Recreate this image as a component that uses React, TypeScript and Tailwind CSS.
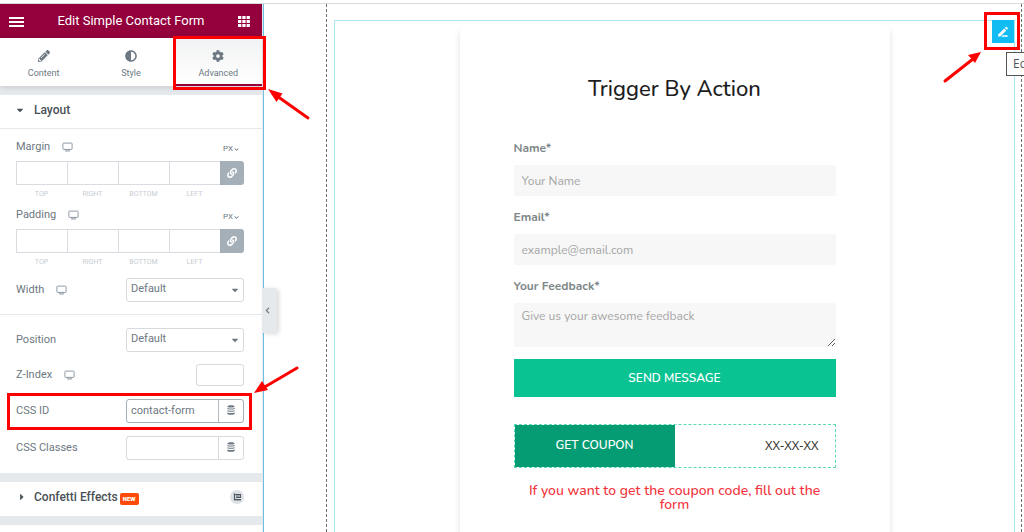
import type { ReactNode } from "react";
import {
  FaAdjust,
  FaCaretDown,
  FaCaretRight,
  FaCog,
  FaLink,
  FaPencilAlt,
  FaChevronDown,
  FaChevronLeft,
} from "react-icons/fa";

function MenuIcon() {
  return (
    <svg viewBox="0 0 15 10" className="h-[10px] w-[15px]" fill="currentColor" aria-hidden="true">
      <rect y="0" width="15" height="2" />
      <rect y="4" width="15" height="2" />
      <rect y="8" width="15" height="2" />
    </svg>
  );
}

function GridIcon() {
  return (
    <svg viewBox="0 0 12 11" className="h-[11px] w-3" fill="currentColor" aria-hidden="true">
      {[0, 4, 8].map((y) =>
        [0, 4.3, 8.6].map((x) => <rect key={`${x}-${y}`} x={x} y={y} width="3.3" height="3" />)
      )}
    </svg>
  );
}

function DesktopIcon() {
  return (
    <svg viewBox="0 0 11 10" className="h-[10px] w-[11px] text-[#8f9ba6]" fill="none" stroke="currentColor" aria-hidden="true">
      <rect x="0.9" y="1.1" width="9.2" height="6.3" rx="0.6" />
      <path d="M4 7.5v1.4M7 7.5v1.4M3.2 9h4.6" />
    </svg>
  );
}

function DatabaseIcon() {
  return (
    <svg viewBox="0 0 8 10" className="h-[10px] w-2" fill="currentColor" aria-hidden="true">
      <path d="M0.300 1.900C0.300 0.800 1.700 0.300 4 0.300s3.700 0.500 3.700 1.600q-3.700 1.200-7.400 0z" />
      <path d="M0.300 3.100q3.700 1 7.400 0v1q-3.700 1-7.400 0z" />
      <path d="M0.300 5.300q3.700 1 7.400 0v1q-3.700 1-7.400 0z" />
      <path d="M0.300 7.500q3.700 1 7.400 0v0.900C7.700 9.400 6.300 9.800 4 9.800S0.300 9.400 0.300 8.400z" />
    </svg>
  );
}

function PenIcon() {
  return (
    <svg viewBox="0 0 12 12" className="h-3 w-3" fill="currentColor" aria-hidden="true">
      <path d="M1.2 8.6 7.3 2.4l2 2-6.1 6.1H1.2z" />
      <path d="M7.9 1.8l0.8-0.8q0.5-0.4 1 0l1 1q0.4 0.5 0 1l-0.8 0.8z" />
      <path d="M5.6 9.3h5v1.4H4.3z" />
    </svg>
  );
}

function Tab({ icon, label, active = false }: { icon: ReactNode; label: string; active?: boolean }) {
  return (
    <button
      type="button"
      role="tab"
      aria-selected={active}
      className={
        active
          ? "flex w-full flex-col items-center border-b-2 border-[#93003c] bg-linear-to-b from-[#f1f2f3] to-white pt-3 text-[#6d7882]"
          : "flex w-full flex-col items-center border-b-2 border-white pt-3 text-[#6d7882]"
      }
    >
      <span className="text-[12px]">{icon}</span>
      <span className="mt-1 h-[18px] text-[9px] leading-[14px]">{label}</span>
    </button>
  );
}

function Dimensions({ label }: { label: string }) {
  const sides = ["TOP", "RIGHT", "BOTTOM", "LEFT"];
  return (
    <fieldset>
      <div className="flex h-4 items-center">
        <span className="mr-3">{label}</span>
        <DesktopIcon />
        <button type="button" aria-label={`${label} unit`} className="mr-[5px] ml-auto flex items-center gap-px pt-1 text-[8px]">
          PX <FaChevronDown className="text-[5px]" />
        </button>
      </div>
      <div className="mt-[6px] flex">
        <div className="flex flex-1">
          {sides.map((side) => (
            <label key={side} className="flex flex-1 flex-col text-center text-[7px] leading-[18px] text-[#c6ccd2]">
              <input
                type="text"
                aria-label={`${label} ${side}`}
                className="order-first h-6 w-full border border-r-0 border-[#d9dde1] bg-white text-center text-[11px] text-[#6d7882]"
              />
              {side}
            </label>
          ))}
        </div>
        <button type="button" aria-label="Link values" className="flex h-6 w-6 items-center justify-center rounded-r-[3px] bg-[#a4afb7] text-[10px] text-white">
          <FaLink />
        </button>
      </div>
    </fieldset>
  );
}

function SelectRow({ id, label, responsive = false }: { id: string; label: string; responsive?: boolean }) {
  return (
    <div className="flex h-6 items-center">
      <label htmlFor={id} className="mr-3">{label}</label>
      {responsive && <DesktopIcon />}
      <div className="relative ml-auto w-[118px]">
        <select id={id} className="h-6 w-full appearance-none rounded-[3px] border border-[#d5dadf] bg-white pr-5 pb-0.5 pl-1 text-[11px] text-[#6d7882]">
          <option>Default</option>
        </select>
        <FaCaretDown className="pointer-events-none absolute top-[7px] right-1 text-[10px]" />
      </div>
    </div>
  );
}

function DynamicField({ id, label, value = "", strong = false }: { id: string; label: string; value?: string; strong?: boolean }) {
  return (
    <div className="flex h-6 items-center justify-between">
      <label htmlFor={id}>{label}</label>
      <div
        className={
          strong
            ? "flex h-6 w-[118px] divide-x divide-[#b4bcc3] rounded-[3px] border border-[#a4afb7]"
            : "flex h-6 w-[118px] divide-x divide-[#d5dadf] rounded-[3px] border border-[#d5dadf]"
        }
      >
        <input id={id} type="text" defaultValue={value} className="min-w-0 flex-1 bg-transparent px-1 pt-px text-[11px] text-[#6d7882]" />
        <button type="button" aria-label={`${label} dynamic tags`} className="flex w-6 items-center justify-center pb-0.5">
          <DatabaseIcon />
        </button>
      </div>
    </div>
  );
}

function Sidebar() {
  return (
    <aside className="relative w-[264px] shrink-0 border-r border-[#6ec1e4] bg-[#e6e9ec] pr-px font-[Roboto,sans-serif] text-[11px] text-[#6d7882]">
      <header className="flex h-[34px] items-center justify-between bg-[#93003c] px-[9px] pr-3 text-white">
        <button type="button" aria-label="Menu" className="pt-0.5"><MenuIcon /></button>
        <h1 className="text-[13px]">Edit Simple Contact Form</h1>
        <button type="button" aria-label="Widgets"><GridIcon /></button>
      </header>

      <nav role="tablist" className="relative grid grid-cols-3 bg-white shadow-[0_1px_6px_rgba(0,0,0,0.15)]">
        <Tab icon={<FaPencilAlt />} label="Content" />
        <Tab icon={<FaAdjust />} label="Style" />
        <div className="relative flex">
          <Tab icon={<FaCog />} label="Advanced" active />
          <div className="pointer-events-none absolute -top-[2px] -right-1 -bottom-1 -left-[2px] z-20 border-[3px] border-[#fe0000]" />
          <svg viewBox="0 0 44 34" className="pointer-events-none absolute top-[49px] left-[92px] z-20 h-[34px] w-11" aria-hidden="true">
            <path d="M41 31 10 9" stroke="#fe0000" strokeWidth="3" strokeLinecap="round" />
            <path d="M1 2 15.500 6.500 9.500 15z" fill="#fe0000" />
          </svg>
        </div>
      </nav>

      <section className="mt-[9px] bg-white">
        <h2>
          <button type="button" aria-expanded="true" className="flex h-[34px] w-full items-center border-b border-[#e6e9ec] pb-1 pl-4 text-[12px] font-medium text-[#495157]">
            <FaCaretDown className="mr-[10px] w-2 text-[10px]" />Layout
          </button>
        </h2>
        <div className="flex flex-col pt-[10px] pr-[18px] pb-[13px] pl-4">
          <Dimensions label="Margin" />
          <div className="mt-1"><Dimensions label="Padding" /></div>
          <div className="mt-[7px]"><SelectRow id="width" label="Width" responsive /></div>
          <hr className="mt-3 -mr-[18px] mb-[13px] -ml-4 border-[#e6e9ec]" />
          <SelectRow id="position" label="Position" />
          <div className="mt-3 flex h-[22px] items-center">
            <label htmlFor="z-index" className="mr-3">Z-Index</label>
            <DesktopIcon />
            <input id="z-index" type="text" className="ml-auto h-[22px] w-12 rounded-[3px] border border-[#d5dadf] px-1" />
          </div>
          <div className="relative mt-[13px]">
            <DynamicField id="css-id" label="CSS ID" value="contact-form" strong />
            <div className="pointer-events-none absolute -top-[6px] -right-2 -bottom-[7px] -left-[9px] z-20 border-[3px] border-[#fe0000]" />
            <svg viewBox="0 0 46 30" className="pointer-events-none absolute -top-[34px] left-[237px] z-20 h-[30px] w-[46px]" aria-hidden="true">
              <path d="M44 3 10 23" stroke="#fe0000" strokeWidth="3" strokeLinecap="round" />
              <path d="M1 28 9 16 15 25z" fill="#fe0000" />
            </svg>
          </div>
          <div className="mt-[13px]"><DynamicField id="css-classes" label="CSS Classes" /></div>
        </div>
      </section>

      <section className="mt-[9px] bg-white">
        <h2>
          <button type="button" aria-expanded="false" className="flex h-[34px] w-full items-center pr-[18px] pb-1 pl-[18px] text-[12px] font-medium text-[#495157]">
            <FaCaretRight className="mr-2 w-2 text-[10px]" />Confetti Effects
            <span className="mt-1 ml-0.5 rounded-xs bg-[#ff4b0a] px-[3px] text-[6px] leading-3 font-black text-white">NEW</span>
            <span className="ml-auto flex h-[14px] w-[14px] items-center justify-center rounded-full bg-[#dde1e6]">
              <svg viewBox="0 0 8 8" className="h-2 w-2" fill="none" stroke="#4f585f" aria-hidden="true">
                <path d="M1.500 0.500V7M1 1.500H7.500V4.500H3M3 3H6.500" strokeWidth="1.200" />
                <path d="M1 6.700H8" strokeWidth="1.400" />
              </svg>
            </span>
          </button>
        </h2>
      </section>
      <section className="mt-[9px] h-10 bg-white" />

      <button type="button" aria-label="Hide panel" className="absolute top-[284px] left-[262px] z-10 flex h-[45px] w-[15px] items-center justify-center rounded-r-[3px] bg-[#e6e9ec] pr-1 text-[7px] shadow-[2px_1px_4px_rgba(0,0,0,0.15)]">
        <FaChevronLeft />
      </button>
    </aside>
  );
}

const fieldClass = "mt-[7px] block w-full rounded-xs bg-[#f7f7f7] px-2 text-[12px] text-[#555] placeholder-[#a5a5a5]";

function ContactCard() {
  return (
    <div className="mx-auto mt-1 w-full max-w-[430px] rounded-md bg-white px-[54px] pt-12 pb-12 shadow-[0_4px_6px_rgba(0,0,0,0.12)]">
      <h2 className="text-center text-[22px] leading-8 font-medium text-[#1d1d1d]">Trigger By Action</h2>
      <form className="mt-[33px] flex flex-col text-[12px] text-[#7e8889]">
        <label htmlFor="name" className="leading-5 font-bold">Name*</label>
        <input id="name" type="text" placeholder="Your Name" className={`${fieldClass} h-[31px]`} />
        <label htmlFor="email" className="mt-[11px] leading-5 font-bold">Email*</label>
        <input id="email" type="email" placeholder="example@email.com" className={`${fieldClass} h-[31px]`} />
        <label htmlFor="feedback" className="mt-[11px] leading-5 font-bold">Your Feedback*</label>
        <textarea id="feedback" placeholder="Give us your awesome feedback" className={`${fieldClass} h-11 resize-y pt-1`} />
        <button type="button" className="mt-3 h-[38px] bg-[#09c392] text-[12px] font-semibold text-white">SEND MESSAGE</button>
      </form>
      <div className="mt-[27px] grid h-11 grid-cols-2 border border-dashed border-[#5cd9b2]">
        <button type="button" className="bg-[#059c73] pb-0.5 text-[12px] font-semibold text-white">GET COUPON</button>
        <div className="flex items-center justify-end pr-4 font-['Open_Sans',sans-serif] text-[13px] text-[#333]">XX-XX-XX</div>
      </div>
      <p className="mt-4 px-2 text-center text-[14px] leading-[14px] font-medium text-[#f2333b]">
        If you want to get the coupon code, fill out the form
      </p>
    </div>
  );
}

export default function App() {
  return (
    <div className="flex h-screen flex-col overflow-hidden bg-white">
      <div className="h-1 shrink-0 border-b border-[#dadada]" />
      <div className="flex min-h-0 flex-1">
        <Sidebar />
        <main className="min-w-0 flex-1 pr-[2px] pl-[62px] font-[Nunito,Lato,sans-serif]">
          <div className="h-full border-x border-dashed border-[#6b7075] pt-4 pr-[6px] pl-[7px]">
            <div className="relative border border-b-0 border-[#a8e6f8]">
              <ContactCard />
              <div className="absolute -top-px right-0">
                <button type="button" aria-label="Edit" className="flex h-[23px] w-[22px] items-center justify-center bg-[#10bcf2] text-white">
                  <PenIcon />
                </button>
                <div className="pointer-events-none absolute -top-2 -right-[6px] -bottom-[7px] -left-2 border-[3px] border-[#fe0000]" />
                <svg viewBox="0 0 42 34" className="pointer-events-none absolute top-[30px] -left-[50px] h-[34px] w-[42px]" aria-hidden="true">
                  <path d="M3 31 31 9" stroke="#fe0000" strokeWidth="3" strokeLinecap="round" />
                  <path d="M39 2 33 13 26 5z" fill="#fe0000" />
                </svg>
                <div role="tooltip" className="absolute top-8 left-[14px] border border-[#555] bg-white px-[6px] font-['Open_Sans',sans-serif] text-[12px] leading-[22px] whitespace-nowrap text-[#555]">
                  Edit
                </div>
              </div>
            </div>
          </div>
        </main>
      </div>
    </div>
  );
}
